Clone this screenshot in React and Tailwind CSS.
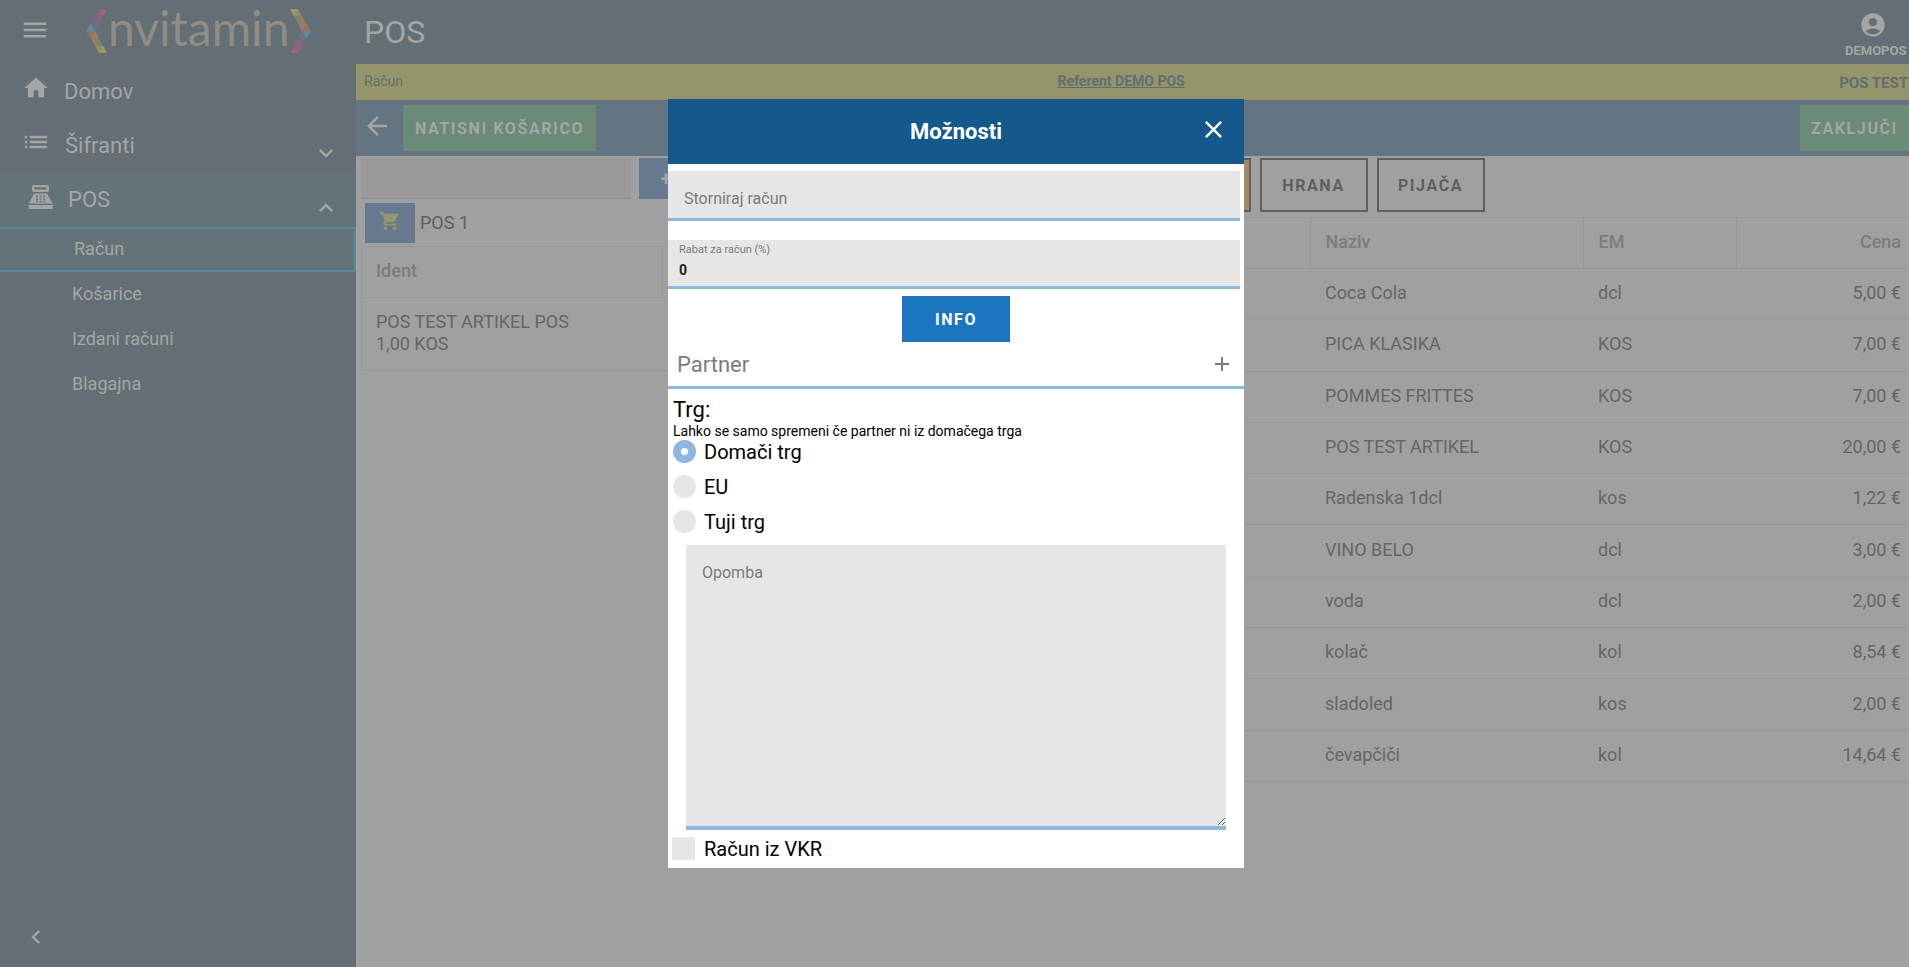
import { MdMenu, MdHome, MdList, MdKeyboardArrowDown, MdKeyboardArrowUp, MdKeyboardArrowLeft, MdArrowBack, MdShoppingCart, MdAccountCircle, MdClose, MdAdd } from 'react-icons/md';

const articles = [
  { name: 'Coca Cola', unit: 'dcl', price: '5,00 €' },
  { name: 'PICA KLASIKA', unit: 'KOS', price: '7,00 €' },
  { name: 'POMMES FRITTES', unit: 'KOS', price: '7,00 €' },
  { name: 'POS TEST ARTIKEL', unit: 'KOS', price: '20,00 €' },
  { name: 'Radenska 1dcl', unit: 'kos', price: '1,22 €' },
  { name: 'VINO BELO', unit: 'dcl', price: '3,00 €' },
  { name: 'voda', unit: 'dcl', price: '2,00 €' },
  { name: 'kolač', unit: 'kol', price: '8,54 €' },
  { name: 'sladoled', unit: 'kos', price: '2,00 €' },
  { name: 'čevapčiči', unit: 'kol', price: '14,64 €' },
];

const subItems = ['Košarice', 'Izdani računi', 'Blagajna'];

const markets = ['Domači trg', 'EU', 'Tuji trg'];

const RegisterIcon = () => (
  <svg viewBox="0 0 26 26" className="w-[26px] h-[26px] mb-1.5" fill="currentColor">
    <path fillRule="evenodd" d="M6 1h13a2 2 0 0 1 2 2v3a2 2 0 0 1-2 2H6a2 2 0 0 1-2-2V3a2 2 0 0 1 2-2zm.5 2.2v2.4h12V3.200z" />
    <path fillRule="evenodd" d="M6 9.500h13l5.500 10H.800zM8 11.500v1.500h2v-1.500zm3.600 0v1.500h2v-1.500zm3.600 0v1.500h2v-1.500zM8 14.200v1.500h2v-1.500zm3.600 0v1.500h2v-1.500zm3.600 0v1.500h2v-1.500zM8 16.800v1.500h2v-1.500zm3.600 0v1.500h2v-1.500zm3.600 0v1.500h2v-1.500z" />
    <path d="M.5 21h24.500v2.500a1.500 1.500 0 0 1-1.500 1.500H2a1.500 1.500 0 0 1-1.500-1.500z" />
  </svg>
);

const Bracket = ({ flip }) => (
  <svg viewBox="0 0 22 44" className={flip ? 'w-[22px] h-[44px] rotate-180' : 'w-[22px] h-[44px]'}>
    <path d="M13 0h8l-4 7.500z" fill="#99677a" />
    <path d="M13 0l4 7.500-8 0z" fill="#9c5f78" />
    <path d="M17 7.500h-8l4 7z" fill="#8a637e" />
    <path d="M9 7.500l4 7H5z" fill="#746a8a" />
    <path d="M13 14.500H5l4 7.500z" fill="#67738b" />
    <path d="M5 14.500L9 22H0z" fill="#5b8b9e" />
    <path d="M0 22h9l-4 7.500z" fill="#9c705f" />
    <path d="M9 22l4 7.500H5z" fill="#9c8065" />
    <path d="M5 29.500h8l-4 7z" fill="#9e7c60" />
    <path d="M13 29.500l4 7H9z" fill="#867f70" />
    <path d="M9 36.500h8l-4 7.500z" fill="#949262" />
    <path d="M17 36.500l4 7.500h-8z" fill="#9a9a60" />
  </svg>
);

const Sidebar = () => (
  <aside className="w-[356px] shrink-0 bg-[#636f74] text-[#a5a5a5] flex flex-col">
    <div className="h-16 flex items-center pl-5">
      <button aria-label="Meni" className="mb-1"><MdMenu size={30} /></button>
      <div className="ml-9 mb-0.5 flex items-center text-[#918c85]">
        <Bracket />
        <span className="font-['Lato'] text-5xl leading-[60px] pb-1.5">nvitamin</span>
        <Bracket flip />
      </div>
    </div>

    <nav className="flex-1 text-[22px]">
      <a href="#domov" className="h-[54px] flex items-center pl-[22px]">
        <MdHome size={28} className="mb-1.5" />
        <span className="ml-3.5">Domov</span>
      </a>
      <a href="#sifranti" className="h-[54px] flex items-center pl-[21px]">
        <MdList size={30} className="mb-1.5" />
        <span className="ml-3.5">Šifranti</span>
        <MdKeyboardArrowDown size={28} className="mt-4 ml-auto mr-4" />
      </a>
      <a href="#pos" className="h-[55px] flex items-center pl-7 bg-[#637378]">
        <RegisterIcon />
        <span className="ml-3.5">POS</span>
        <MdKeyboardArrowUp size={28} className="mt-4 ml-auto mr-4" />
      </a>
      <a href="#racun" className="h-[45px] flex items-center pl-[74px] pb-0.5 text-lg bg-[#637378] border-y-2 border-r-2 border-[#5c8798]">Račun</a>
      {subItems.map((item) => (
        <a key={item} href={`#${item}`} className="h-[45px] flex items-center pl-[72px] pb-0.5 text-lg">{item}</a>
      ))}
    </nav>

    <button aria-label="Skrči meni" className="pl-[22px] pb-4"><MdKeyboardArrowLeft size={28} /></button>
  </aside>
);

const Cart = () => (
  <section className="flex-1 min-w-0 pl-[5px] pt-0.5">
    <div className="flex gap-2">
      <input aria-label="Ident artikla" className="w-[270px] h-[41px] bg-[#9a9a9a] border-b border-[#83909b] px-3" />
      <button aria-label="Dodaj" className="w-[54px] h-[41px] bg-[#67798e] text-[#a5a5a5] flex items-center justify-center text-xl font-bold">+</button>
    </div>
    <div className="mt-1 ml-1 flex items-center gap-[5px] text-lg text-[#5f5f5f]">
      <button aria-label="Košarica" className="w-[50px] h-10 pb-1 bg-[#67798e] text-[#97986a] flex items-center justify-center">
        <MdShoppingCart size={22} />
      </button>
      <span>POS 1</span>
    </div>
    <table className="mt-[3px] w-full table-fixed border border-[#979797] text-lg leading-[22px] text-[#666666]">
      <thead>
        <tr className="h-[51px] border-b border-[#979797] text-[#7c7c7c]">
          <th className="w-[301px] pl-3.5 pb-0.5 text-left font-medium border-r border-[#979797]">Ident</th>
          <th></th>
        </tr>
      </thead>
      <tbody>
        <tr className="h-[73px]">
          <td className="pl-3.5 pb-0.5">POS TEST ARTIKEL POS<br />1,00 KOS</td>
          <td></td>
        </tr>
      </tbody>
    </table>
  </section>
);

const Articles = () => (
  <section className="flex-1 min-w-0 pl-[15px] pt-0.5">
    <div className="flex gap-[9px] text-base font-bold tracking-widest text-[#5f5f5f]">
      <button aria-label="Vse skupine" className="w-[108px] h-[54px] border-2 border-[#5f5f5f] bg-[#a38769]"></button>
      <button className="w-[108px] h-[54px] pt-0.5 border-2 border-[#5f5f5f]">HRANA</button>
      <button className="w-[108px] h-[54px] pt-0.5 border-2 border-[#5f5f5f]">PIJAČA</button>
    </div>
    <table className="mt-[5px] h-[565px] w-full table-fixed border-y border-[#979797] text-lg text-[#666666]">
      <thead>
        <tr className="h-[51px] border-b border-[#979797] text-[#7c7c7c]">
          <th className="border-r border-[#979797]"></th>
          <th className="w-[273px] pl-[15px] pb-0.5 text-left font-medium border-r border-[#979797]">Naziv</th>
          <th className="w-[153px] pl-[15px] pb-0.5 text-left font-medium border-r border-[#979797]">EM</th>
          <th className="w-[173px] pr-2 pb-0.5 text-right font-medium">Cena</th>
        </tr>
      </thead>
      <tbody>
        {articles.map((article) => (
          <tr key={article.name} className="h-[51px] border-b border-[#979797]">
            <td></td>
            <td className="pl-[15px] pb-0.5">{article.name}</td>
            <td className="pl-[15px] pb-0.5">{article.unit}</td>
            <td className="pr-2 pb-0.5 text-right">{article.price}</td>
          </tr>
        ))}
      </tbody>
    </table>
  </section>
);

const OptionsDialog = () => (
  <div className="fixed inset-0 pl-[3px] flex items-center justify-center">
    <div role="dialog" aria-labelledby="options-title" className="w-[576px] bg-white text-black">
      <div className="relative h-[65px] bg-[#15588c] text-white flex items-center justify-center">
        <h2 id="options-title" className="text-[22px] font-bold">Možnosti</h2>
        <button aria-label="Zapri" className="absolute right-4 top-4"><MdClose size={29} /></button>
      </div>

      <div className="pt-[7px] pr-1">
        <input
          aria-label="Storniraj račun"
          placeholder="Storniraj račun"
          className="block w-full h-[50px] px-4 pt-2 bg-[#e6e6e6] border-b-[3px] border-[#8cb8e0] placeholder:text-[#7b7b7b]"
        />
        <div className="mt-[19px] h-[49px] px-[11px] pt-0.5 bg-[#e6e6e6] border-b-[3px] border-[#8cb8e0]">
          <label htmlFor="discount" className="block text-[11px] leading-4 text-[#7b7b7b]">Rabat za račun (%)</label>
          <input id="discount" defaultValue="0" className="block w-full h-6 text-sm font-bold text-[#222222]" />
        </div>
      </div>

      <button className="mt-[7px] mx-auto block w-[108px] h-[46px] pt-0.5 bg-[#1b75bf] text-white text-base font-bold tracking-widest">INFO</button>

      <div className="h-[47px] pl-[9px] pr-2.5 flex items-center justify-between border-b-[3px] border-[#8cb8e0] text-[22px] text-[#7b7b7b]">
        <span>Partner</span>
        <button aria-label="Dodaj partnerja"><MdAdd size={24} /></button>
      </div>

      <fieldset className="pl-[5px] pt-2">
        <legend className="float-left w-full text-[22px] leading-[26px]">Trg:</legend>
        <p className="clear-both text-sm leading-4">Lahko se samo spremeni če partner ni iz domačega trga</p>
        <div className="mt-px flex flex-col gap-3 text-xl leading-[23px]">
          {markets.map((market, idx) => (
            <label key={market} className="h-[23px] flex items-center gap-2">
              <input
                type="radio"
                name="market"
                defaultChecked={idx === 0}
                className="appearance-none w-[23px] h-[23px] rounded-full bg-[#e6e6e6] checked:bg-white checked:border-8 checked:border-[#8cb8e0]"
              />
              <span className="pt-0.5">{market}</span>
            </label>
          ))}
        </div>
      </fieldset>

      <textarea
        aria-label="Opomba"
        placeholder="Opomba"
        className="mt-3 mx-[18px] block w-[540px] h-[285px] px-4 pt-4 bg-[#e6e6e6] border-b-4 border-[#8cb8e0] placeholder:text-[#7b7b7b]"
      ></textarea>

      <label className="mt-[7px] mb-2 h-[23px] pl-1 flex items-center gap-[9px] text-xl leading-[23px]">
        <input type="checkbox" className="appearance-none w-[23px] h-[23px] bg-[#e6e6e6]" />
        <span className="pt-0.5">Račun iz VKR</span>
      </label>
    </div>
  </div>
);

const App = () => {
  return (
    <div className="min-h-screen flex bg-[#a0a0a0] font-['Roboto',sans-serif] overflow-hidden">
      <Sidebar />

      <div className="flex-1 min-w-0">
        <header className="h-16 bg-[#636f74] text-[#a5a5a5] flex items-center justify-between pl-2">
          <h1 className="text-[32px]">POS</h1>
          <div className="w-16 pt-2 flex flex-col items-start gap-0.5 text-[13px] leading-5 font-bold whitespace-nowrap">
            <MdAccountCircle size={28} className="ml-3.5" />
            DEMOPOS
          </div>
        </header>

        <div className="h-9 pl-2 flex items-center justify-between bg-[#94956a] text-sm text-[#626e73]">
          <span className="pb-0.5">Račun</span>
          <a href="#referent" className="pb-0.5 font-bold underline">Referent DEMO POS</a>
          <span className="pt-1 pr-px font-bold text-[15px]">POS TEST</span>
        </div>

        <div className="h-14 flex items-center bg-[#647480] text-[#a5a5a5] text-base font-bold tracking-widest">
          <button aria-label="Nazaj" className="ml-1.5 mb-1"><MdArrowBack size={30} /></button>
          <button className="ml-[11px] w-[193px] h-[46px] pt-0.5 bg-[#6b8b79]">NATISNI KOŠARICO</button>
          <button className="ml-auto w-[109px] h-[46px] pt-0.5 bg-[#6b8b79]">ZAKLJUČI</button>
        </div>

        <main className="flex">
          <Cart />
          <Articles />
        </main>
      </div>

      <OptionsDialog />
    </div>
  );
};

export default App;
